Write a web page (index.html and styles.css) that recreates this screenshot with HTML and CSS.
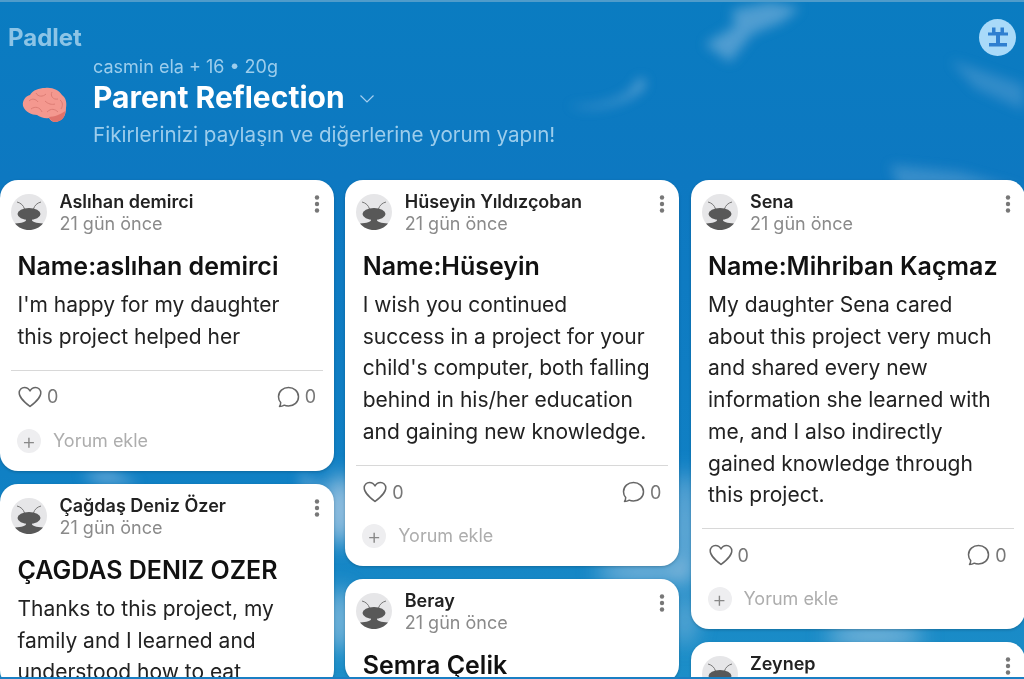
FILE: index.html
```html
<!DOCTYPE html>
<html>
<head>
    <title>Parent Reflection</title>
    <link rel="stylesheet" href="styles.css">
</head>
<body>
    <svg class="sprite" width="0" height="0">
        <symbol id="ant" viewBox="0 0 36 36">
            <circle cx="18" cy="18" r="18" fill="#e6e6e8"/>
            <path d="M13.500 15C12.500 11.500 10 9 6 8M22.500 15C23.500 11.500 26 9 30 8" fill="none" stroke="#777" stroke-width="1"/>
            <ellipse cx="18" cy="20" rx="11.500" ry="6" fill="#585858"/>
            <path d="M15 24H21V26C21 28 25 29 32 29.500C28.500 33.800 23.500 36 18 36C12.500 36 7.500 33.800 4 29.500C11 29 15 28 15 26Z" fill="#585858"/>
        </symbol>
        <symbol id="dots" viewBox="0 0 6 20">
            <circle cx="3" cy="3.500" r="2.200" fill="#777"/>
            <circle cx="3" cy="10" r="2.200" fill="#777"/>
            <circle cx="3" cy="16.500" r="2.200" fill="#777"/>
        </symbol>
        <symbol id="heart" viewBox="0 0 24 22">
            <path d="M12 20.500C7 16.500 1.200 12 1.200 7C1.200 3.800 3.600 1.500 6.500 1.500C8.800 1.500 10.800 2.700 12 5C13.200 2.700 15.200 1.500 17.500 1.500C20.400 1.500 22.800 3.800 22.800 7C22.800 12 17 16.500 12 20.500Z" fill="none" stroke="#666" stroke-width="1.500" stroke-linejoin="round"/>
        </symbol>
        <symbol id="bubble" viewBox="0 0 24 22">
            <path d="M3.500 20.500C5 20.500 7 20 8.300 19.200C9.500 19.800 11 20 12.500 20C18 20 22.500 16 22.500 10.700C22.500 5.500 18 1.500 12.500 1.500C7 1.500 2.500 5.500 2.500 10.700C2.500 13 3.300 15 4.700 16.500C4.700 18 4.300 19.400 3.500 20.500Z" fill="none" stroke="#666" stroke-width="1.500" stroke-linejoin="round"/>
        </symbol>
    </svg>

    <div class="page">
        <!-- clouds behind everything -->
        <svg class="sky" width="1024" height="679" viewBox="0 0 1024 679">
            <defs>
                <filter id="soft" x="-40%" y="-40%" width="180%" height="180%"><feGaussianBlur stdDeviation="6"/></filter>
                <filter id="softer" x="-40%" y="-40%" width="180%" height="180%"><feGaussianBlur stdDeviation="10"/></filter>
            </defs>
            <g fill="#b9cfe8" filter="url(#soft)">
                <path d="M705 44L735 26L732 10L770 2L800 8L782 22L752 34L730 62Z" opacity="0.4"/>
                <path d="M568 105C590 108 615 104 632 90L640 78L646 82C640 100 595 114 568 105Z" opacity="0.5"/>
                <path d="M950 60L1024 85V110L975 88Z" opacity="0.22"/>
                <path d="M890 165L960 172L1024 190H900Z" opacity="0.25"/>
                <path d="M80 475L110 470L140 484H100Z" opacity="0.45"/>
                <path d="M300 472L334 490L300 490Z" opacity="0.35"/>
            </g>
            <g fill="#b8d0e6" filter="url(#softer)">
                <ellipse cx="340" cy="510" rx="14" ry="36" opacity="0.85"/>
                <ellipse cx="340" cy="620" rx="14" ry="32" opacity="0.6"/>
                <ellipse cx="685" cy="530" rx="12" ry="60" opacity="0.55"/>
                <ellipse cx="645" cy="572" rx="50" ry="8" opacity="0.8"/>
                <ellipse cx="875" cy="636" rx="50" ry="8" opacity="0.8"/>
                <ellipse cx="685" cy="620" rx="12" ry="26" opacity="0.4"/>
            </g>
        </svg>

        <header class="header">
            <div class="topbar">
                <span class="logo">Padlet</span>
                <span class="user-btn">
                    <svg width="24" height="24" viewBox="0 0 24 24">
                        <path d="M6 2.500H9.500V7H14.500V2.500H18V7.500H22V10.500H14V18H21V21.500H3V18H10V10.500H2V7.500H6Z" fill="#2f7fd0"/>
                    </svg>
                </span>
            </div>
            <div class="info">
                <svg class="brain" width="48" height="37" viewBox="0 0 48 37">
                    <path d="M2 19C1 13 5 9 9 8C12 3 18 1 24 1C31 0 38 3 41 8C45 11 46 16 45 21C45 27 43 32 38 34C34 36 30 35 28 31C24 32 19 30 16 28C11 28 4 25 2 19Z" fill="#f4988f"/>
                    <path d="M28 30C33 30 40 27 44.500 24C44 29 42 33 38 34C34 36 30 35 28 30Z" fill="#e0736c"/>
                    <path d="M8 14C11 11 15 12 17 15M15 6C17 10 22 10 25 7M31 5C29 9 32 13 37 12M10 22C14 19 19 20 21 25M24 14C27 17 31 18 34 17M39 13C42 15 42 19 40 22M26 25C30 21 34 22 37 25" fill="none" stroke="#dd7d75" stroke-width="1"/>
                </svg>
                <div class="info-text">
                    <div class="meta">casmin ela + 16 • 20g</div>
                    <h1 class="title">Parent Reflection
                        <svg class="chevron" width="16" height="10" viewBox="0 0 16 10"><path d="M1.500 1.500L8 8L14.500 1.500" fill="none" stroke="#a5cff0" stroke-width="1.200"/></svg>
                    </h1>
                    <div class="subtitle">Fikirlerinizi paylaşın ve diğerlerine yorum yapın!</div>
                </div>
            </div>
        </header>

        <main class="columns">
            <div class="column">
                <article class="card">
                    <div class="card-head">
                        <svg class="avatar"><use href="#ant"/></svg>
                        <div class="author">
                            <div class="name">Aslıhan demirci</div>
                            <div class="date">21 gün önce</div>
                        </div>
                        <svg class="menu"><use href="#dots"/></svg>
                    </div>
                    <h2 class="card-title">Name:aslıhan demirci</h2>
                    <p class="card-body">I'm happy for my daughter this project helped her</p>
                    <div class="card-foot">
                        <div class="reactions">
                            <span class="count"><svg class="react-icon"><use href="#heart"/></svg><span>0</span></span>
                            <span class="count"><svg class="react-icon"><use href="#bubble"/></svg><span>0</span></span>
                        </div>
                        <div class="add-comment"><span class="plus">+</span>Yorum ekle</div>
                    </div>
                </article>
                <article class="card">
                    <div class="card-head">
                        <svg class="avatar"><use href="#ant"/></svg>
                        <div class="author">
                            <div class="name">Çağdaş Deniz Özer</div>
                            <div class="date">21 gün önce</div>
                        </div>
                        <svg class="menu"><use href="#dots"/></svg>
                    </div>
                    <h2 class="card-title">ÇAGDAS DENIZ OZER</h2>
                    <p class="card-body">Thanks to this project, my family and I learned and understood how to eat</p>
                </article>
            </div>

            <div class="column">
                <article class="card">
                    <div class="card-head">
                        <svg class="avatar"><use href="#ant"/></svg>
                        <div class="author">
                            <div class="name">Hüseyin Yıldızçoban</div>
                            <div class="date">21 gün önce</div>
                        </div>
                        <svg class="menu"><use href="#dots"/></svg>
                    </div>
                    <h2 class="card-title">Name:Hüseyin</h2>
                    <p class="card-body">I wish you continued success in a project for your child's computer, both falling behind in his/her education and gaining new knowledge.</p>
                    <div class="card-foot">
                        <div class="reactions">
                            <span class="count"><svg class="react-icon"><use href="#heart"/></svg><span>0</span></span>
                            <span class="count"><svg class="react-icon"><use href="#bubble"/></svg><span>0</span></span>
                        </div>
                        <div class="add-comment"><span class="plus">+</span>Yorum ekle</div>
                    </div>
                </article>
                <article class="card">
                    <div class="card-head">
                        <svg class="avatar"><use href="#ant"/></svg>
                        <div class="author">
                            <div class="name">Beray</div>
                            <div class="date">21 gün önce</div>
                        </div>
                        <svg class="menu"><use href="#dots"/></svg>
                    </div>
                    <h2 class="card-title">Semra Çelik</h2>
                </article>
            </div>

            <div class="column">
                <article class="card">
                    <div class="card-head">
                        <svg class="avatar"><use href="#ant"/></svg>
                        <div class="author">
                            <div class="name">Sena</div>
                            <div class="date">21 gün önce</div>
                        </div>
                        <svg class="menu"><use href="#dots"/></svg>
                    </div>
                    <h2 class="card-title">Name:Mihriban Kaçmaz</h2>
                    <p class="card-body">My daughter Sena cared about this project very much and shared every new information she learned with me, and I also indirectly gained knowledge through this project.</p>
                    <div class="card-foot">
                        <div class="reactions">
                            <span class="count"><svg class="react-icon"><use href="#heart"/></svg><span>0</span></span>
                            <span class="count"><svg class="react-icon"><use href="#bubble"/></svg><span>0</span></span>
                        </div>
                        <div class="add-comment"><span class="plus">+</span>Yorum ekle</div>
                    </div>
                </article>
                <article class="card">
                    <div class="card-head">
                        <svg class="avatar"><use href="#ant"/></svg>
                        <div class="author">
                            <div class="name">Zeynep</div>
                            <div class="date">21 gün önce</div>
                        </div>
                        <svg class="menu"><use href="#dots"/></svg>
                    </div>
                </article>
            </div>
        </main>
    </div>
</body>
</html>
```

FILE: styles.css
```css
html, body {
    margin: 0;
    height: 100%;
    overflow: hidden;
}
body {
    font-family: 'Inter', 'Liberation Sans', sans-serif;
}
.sprite {
    display: block;
    height: 0;
}
.page {
    position: relative;
    height: 679px;
    box-sizing: border-box;
    overflow: hidden;
    border-top: 2px solid #4f9ccb;
    border-bottom: 2px solid #1a7fc4;
    background: linear-gradient(180deg, #0a7cc1 0%, #0d78c1 26%, #1080c4 70%, #1c8ec8 100%);
}
.sky {
    position: absolute;
    top: -2px;
    left: 0;
}
.header {
    position: relative;
    height: 178px;
    box-sizing: border-box;
    padding: 17px 8px 0 8px;
}
.topbar {
    display: flex;
    justify-content: space-between;
    align-items: center;
    height: 36px;
}
.logo {
    font-size: 24px;
    font-weight: 700;
    color: #8cc4e6;
}
.user-btn {
    display: flex;
    align-items: center;
    justify-content: center;
    width: 37px;
    height: 37px;
    border-radius: 50%;
    background-color: #a9daf9;
}
.info {
    display: flex;
    align-items: center;
    gap: 24px;
    padding-left: 13px;
}
.brain {
    flex: none;
    margin-top: 8px;
}
.meta {
    margin-top: 1px;
    font-size: 18px;
    line-height: 22px;
    color: #9ccdec;
}
.title {
    margin: 0;
    display: flex;
    align-items: center;
    gap: 14px;
    font-size: 30px;
    line-height: 39px;
    font-weight: 700;
    color: #fff;
}
.chevron {
    margin-top: 3px;
}
.subtitle {
    margin-top: 5px;
    font-size: 20.600px;
    line-height: 26px;
    color: #9ccdec;
}
.columns {
    position: relative;
    display: grid;
    grid-template-columns: 334px 334px 334px;
    column-gap: 11.250px;
}
.column {
    display: flex;
    flex-direction: column;
    gap: 13px;
}
.card {
    background-color: #fff;
    border-radius: 18px;
    padding: 14px 11px 0 11px;
    box-shadow: 0 1px 3px rgba(0, 0, 0, 0.2);
}
.card-head {
    display: flex;
    align-items: flex-start;
}
.avatar {
    flex: none;
    width: 36px;
    height: 36px;
    margin-right: 12.500px;
}
.author {
    flex: 1;
    margin-top: -3px;
}
.name {
    font-size: 18px;
    line-height: 22px;
    font-weight: 600;
    color: #222;
}
.date {
    font-size: 18px;
    line-height: 22px;
    color: #8a8a8a;
}
.menu {
    flex: none;
    width: 6px;
    height: 20px;
    margin: 0 3px 0 0;
}
.card-title {
    margin: 13px 0 0 6.500px;
    font-size: 25px;
    line-height: 36px;
    font-weight: 600;
    color: #111;
}
.card-body {
    margin: 5px 16px 0 6.500px;
    font-size: 21px;
    line-height: 31.700px;
    color: #222;
}
.card-foot {
    margin-top: 17.500px;
    border-top: 1px solid #d8d8d8;
    height: 100px;
}
.reactions {
    display: flex;
    justify-content: space-between;
    align-items: center;
    height: 52px;
    padding: 0 7px;
    color: #777;
    font-size: 18px;
}
.count {
    display: flex;
    align-items: center;
    gap: 5px;
}
.react-icon {
    width: 24px;
    height: 22px;
}
.add-comment {
    display: flex;
    align-items: center;
    gap: 12px;
    margin-top: 6px;
    padding-left: 6px;
    font-size: 18px;
    line-height: 24px;
    color: #adadad;
}
.plus {
    display: flex;
    align-items: center;
    justify-content: center;
    width: 24px;
    height: 24px;
    border-radius: 50%;
    background-color: #eeeef0;
    color: #888;
    font-size: 22px;
    font-weight: 300;
}
```
